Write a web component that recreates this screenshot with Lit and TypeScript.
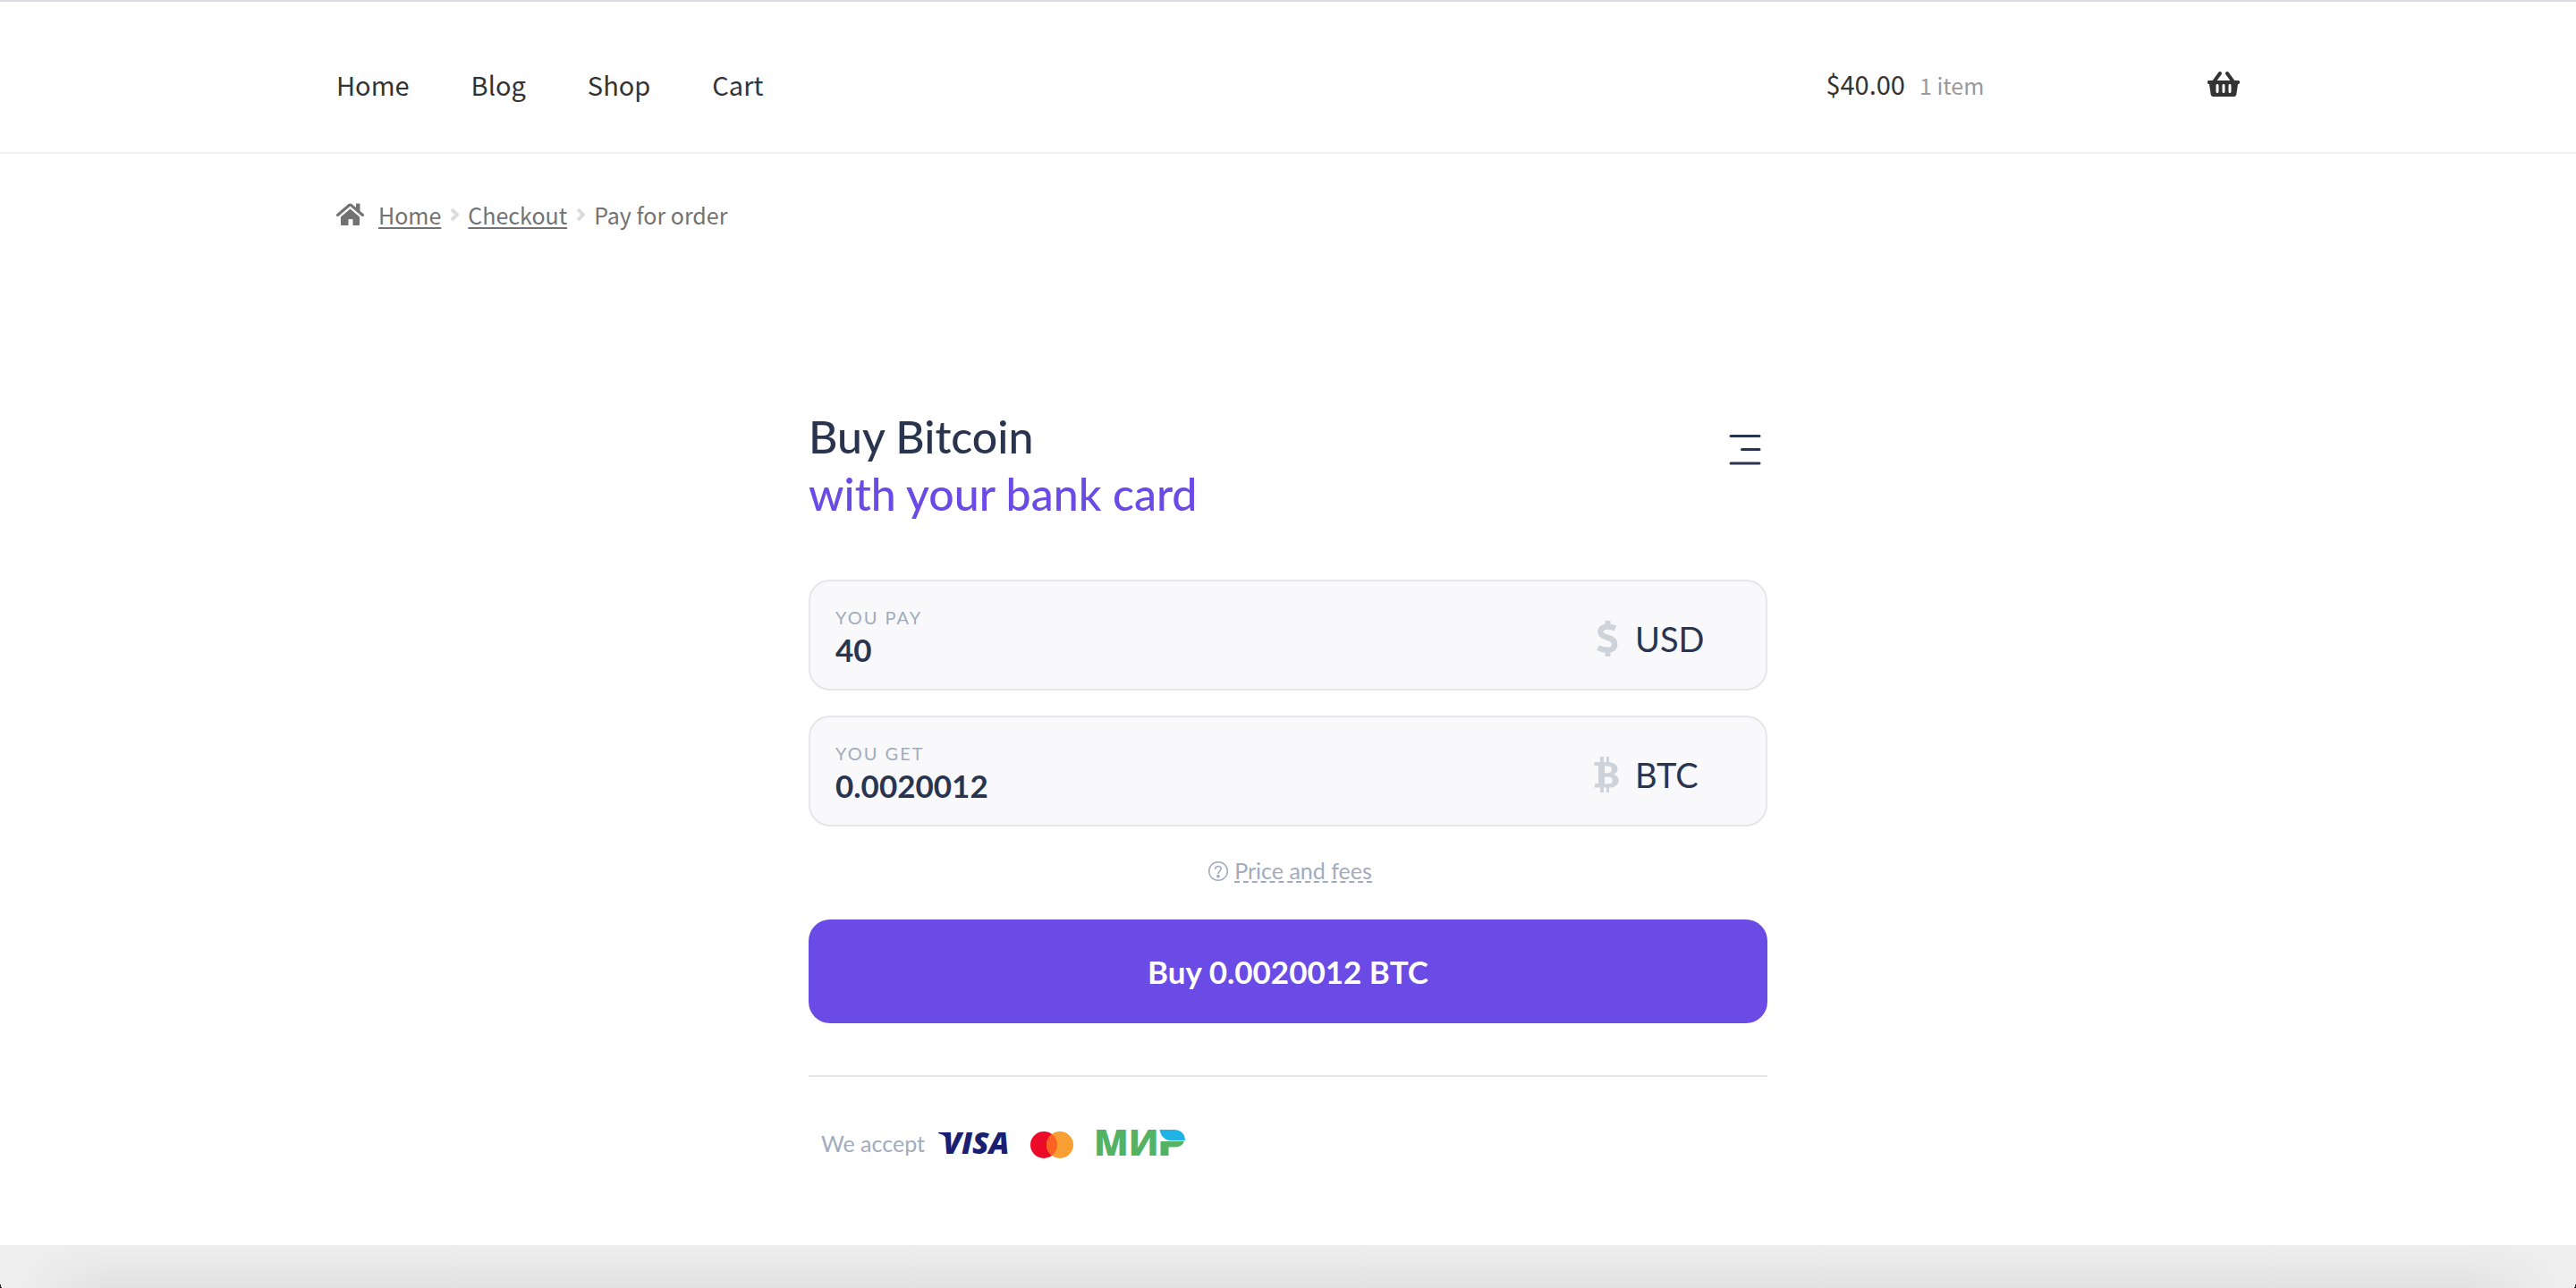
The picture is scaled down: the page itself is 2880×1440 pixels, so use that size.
import { LitElement, html, css, svg } from "lit";
import { customElement, property, state } from "lit/decorators.js";

const basketIcon = svg`<path d="M576 216v16c0 13.255-10.745 24-24 24h-8l-26.113 182.788C514.509 462.435 494.257 480 470.37 480H105.63c-23.887 0-44.139-17.565-47.518-41.212L32 256h-8c-13.255 0-24-10.745-24-24v-16c0-13.255 10.745-24 24-24h67.341l106.78-146.821c10.395-14.292 30.407-17.453 44.701-7.058 14.293 10.395 17.453 30.408 7.058 44.701L170.477 192h235.046L326.12 82.821c-10.395-14.292-7.234-34.306 7.059-44.701 14.291-10.395 34.306-7.235 44.701 7.058L484.659 192H552c13.255 0 24 10.745 24 24zM312 392V280c0-13.255-10.745-24-24-24s-24 10.745-24 24v112c0 13.255 10.745 24 24 24s24-10.745 24-24zm112 0V280c0-13.255-10.745-24-24-24s-24 10.745-24 24v112c0 13.255 10.745 24 24 24s24-10.745 24-24zm-224 0V280c0-13.255-10.745-24-24-24s-24 10.745-24 24v112c0 13.255 10.745 24 24 24s24-10.745 24-24z"/>`;

const dollarIcon = svg`
  <path d="M24 9.500C21 8.200 18.500 7.600 15.500 7.600C10.500 7.600 7.300 9.800 7.300 13.400C7.300 17 10.500 18.300 15 19.600C20 21.100 23.200 23 23.200 27.200C23.200 31.500 20 33.800 15 33.800C11.500 33.800 8 33 4.500 31.200" fill="none" stroke="currentColor" stroke-width="6.400"/>
  <path d="M13.500 1h4a1 1 0 0 1 1 1v5h-6v-5a1 1 0 0 1 1-1zM12.500 35h6v5a1 1 0 0 1-1 1h-4a1 1 0 0 1-1-1z"/>`;

const bitcoinIcon = svg`
  <path d="M7 1h4v6h3v-6h3v6.200c6 .5 9.500 3.300 9.500 7.500c0 3-1.700 5-4.500 6c3.600 .9 5.700 3.300 5.700 6.700c0 4.800-4 7.900-10.700 8.200V41h-3v-5.400h-3V41H7v-5.400H.5L1.500 31H5V11H.5V7H7zM12 11.500v7.700h3c3.200 0 5-1.400 5-4s-1.700-3.700-4.800-3.700zM12 23.500v8h3.500c3.500 0 5.300-1.400 5.300-4s-1.900-4-5.300-4z" fill-rule="evenodd"/>`;

/** One amount row: a labelled box with the currency at its right end. */
@customElement("amount-field")
export class AmountField extends LitElement {
  @property() label = "";
  @property() value = "";
  @property() currency = "";

  static styles = css`
    :host { display: block; }
    .box {
      display: flex;
      align-items: center;
      height: 124px;
      box-sizing: border-box;
      padding: 0 28px;
      border: 2px solid #e5e5eb;
      border-radius: 24px;
      background: #f9f9fc;
      color: #29344f;
    }
    .entry { flex: 1; display: flex; flex-direction: column; min-width: 0; padding-top: 8px; }
    .label { font-size: 20px; line-height: 24px; letter-spacing: 2px; color: #a2abbd; text-transform: uppercase; }
    .amount {
      width: 100%;
      padding: 0;
      border: 0;
      outline: 0;
      background: none;
      color: inherit;
      font: 700 35px/48px Lato, "Liberation Sans", sans-serif;
    }
    .currency { display: flex; align-items: center; gap: 18px; width: 144px; padding-top: 8px; font-size: 38px; line-height: 48px; margin-right: 20px; }
    .symbol { width: 28px; height: 42px; fill: currentColor; color: #ced2d9; flex: none; }
  `;

  render() {
    return html`
      <div class="box">
        <div class="entry">
          <label class="label" for="amount">${this.label}</label>
          <input class="amount" id="amount" inputmode="decimal" .value=${this.value} />
        </div>
        <div class="currency">
          <svg class="symbol" viewBox="0 0 28 42" aria-hidden="true">
            ${this.currency === "USD" ? dollarIcon : bitcoinIcon}
          </svg>
          <span>${this.currency}</span>
        </div>
      </div>
    `;
  }
}

@customElement("app-root")
export class AppRoot extends LitElement {
  @state() private pay = "40";
  @state() private receive = "0.0020012";

  static styles = css`
    :host {
      display: flex;
      flex-direction: column;
      min-height: 100vh;
      background: #fff;
      font-family: "Noto Sans CJK SC", "Noto Sans", sans-serif;
      color: #333;
    }
    a { color: inherit; text-decoration: none; }
    .container { width: 100%; max-width: 2128px; margin: 0 auto; }
    .site-header {
      box-sizing: border-box;
      border-top: 2px solid #dadde1;
      border-bottom: 2px solid #f0f0f0;
      padding: 75px 48px 61px;
    }
    .header-row { display: grid; grid-template-columns: 18fr 5fr; align-items: center; height: 32px; }
    .nav { display: flex; gap: 69px; font-size: 29px; line-height: 32px; }
    .cart { display: flex; align-items: center; justify-content: space-between; font-size: 29px; line-height: 32px; }
    .cart-total { display: flex; align-items: baseline; gap: 16px; }
    .count { font-size: 25px; color: #999; }
    .basket { display: block; width: 36px; height: 32px; fill: #333; }
    .crumb-bar { padding: 52px 48px 0; }
    .crumbs { display: flex; align-items: center; height: 32px; font-size: 25px; line-height: 32px; color: #727272; }
    .crumbs a { text-decoration: underline; text-decoration-thickness: 2px; text-underline-offset: 3px; }
    .home-icon { width: 31px; height: 26px; margin-right: 16px; fill: #727272; }
    .chevron { width: 10px; height: 16px; margin: 0 10px; fill: none; stroke: #dcdcdc; stroke-width: 4; }

    .widget {
      box-sizing: border-box;
      width: 100%;
      max-width: 1072px;
      margin: 200px auto 0;
      font-family: Lato, "Liberation Sans", sans-serif;
      color: #29344f;
    }
    .heading { display: flex; justify-content: space-between; align-items: flex-start; margin-bottom: 64px; }
    .title { margin: 0; font-size: 50px; line-height: 64px; font-weight: 500; }
    .accent { display: block; color: #6a4be6; }
    .menu { display: block; margin: 25px 3px 0 0; padding: 4px; border: 0; background: none; color: inherit; cursor: pointer; }
    .menu svg { display: block; width: 36px; height: 36px; fill: none; stroke: currentColor; stroke-width: 3; stroke-linecap: round; }
    .fields { display: grid; gap: 28px; }
    .fees { display: flex; align-items: center; justify-content: center; gap: 6px; padding: 37px 0 41px 4px; font-size: 25px; line-height: 24px; color: #a2abbd; }
    .fees svg { width: 24px; height: 24px; fill: none; stroke: currentColor; stroke-width: 1.500; stroke-linecap: round; }
    .fees a { border-bottom: 2px dashed currentColor; }
    .buy {
      display: block;
      width: 100%;
      height: 116px;
      border: 0;
      border-radius: 24px;
      background: #6a4be6;
      color: #fff;
      font: 700 35px/48px Lato, "Liberation Sans", sans-serif;
      cursor: pointer;
    }
    .accept {
      display: flex;
      align-items: center;
      margin-top: 58px;
      padding: 52px 14px;
      border-top: 2px solid #e5e5eb;
      font-size: 25px;
      line-height: 44px;
      color: #a2abbd;
    }
    .logo { display: block; height: 44px; overflow: visible; }
    .visa { width: 84px; margin-left: 14px; }
    .mastercard { width: 50px; margin-left: 19px; }
    .mir { width: 100px; margin-left: 25px; }

    .dock {
      height: 48px;
      margin-top: auto;
      background:
        linear-gradient(to top right, #222 50%, transparent 50%) left bottom / 2px 5px no-repeat,
        linear-gradient(to top left, #222 50%, transparent 50%) right bottom / 2px 5px no-repeat,
        linear-gradient(to right, #eeeeee 20px, #eeeeee00 120px, #eeeeee00 calc(100% - 120px), #eeeeee calc(100% - 20px)),
        linear-gradient(#eeeeee, #e2e2e2);
    }
  `;

  render() {
    return html`
      <header class="site-header">
        <div class="container header-row">
          <nav class="nav" aria-label="Primary">
            <a href="#home">Home</a><a href="#blog">Blog</a><a href="#shop">Shop</a><a href="#cart">Cart</a>
          </nav>
          <a class="cart" href="#cart">
            <span class="cart-total"><span>$40.00</span><span class="count">1 item</span></span>
            <svg class="basket" viewBox="0 0 576 512" aria-hidden="true">${basketIcon}</svg>
          </a>
        </div>
      </header>
      <div class="crumb-bar">
        <nav class="container crumbs" aria-label="Breadcrumb">
          <svg class="home-icon" viewBox="0 0 31 26" aria-hidden="true">
            <path d="M1.500 13.500L14.300 2.500Q15.500 1.600 16.700 2.500L29.500 13.500" fill="none" stroke="#727272" stroke-width="3" stroke-linecap="round" />
            <path d="M22 1Q22 .5 22.500 .5H26Q26.500 .5 26.500 1V9.500L22 5.800ZM15.500 6.500L26 15.500V24Q26 25 25 25H18.500V18.500Q18.500 18 18 18H14Q13.500 18 13.500 18.500V25H6Q5 25 5 24V15.500Z" />
          </svg>
          <a href="#home">Home</a>
          ${this.chevron()}
          <a href="#checkout">Checkout</a>
          ${this.chevron()}
          <span>Pay for order</span>
        </nav>
      </div>

      <main class="widget">
        <div class="heading">
          <h1 class="title">Buy Bitcoin <span class="accent">with your bank card</span></h1>
          <button class="menu" type="button" aria-label="Menu">
            <svg viewBox="0 0 36 36"><path d="M2 2.500H34M14.500 17.500H34M2 33H34" /></svg>
          </button>
        </div>
        <div class="fields">
          <amount-field label="You pay" currency="USD" .value=${this.pay}></amount-field>
          <amount-field label="You get" currency="BTC" .value=${this.receive}></amount-field>
        </div>
        <div class="fees">
          <svg viewBox="0 0 24 24" aria-hidden="true">
            <circle cx="12" cy="12" r="10.300" />
            <path d="M8.800 9.500C8.800 7.700 10.100 6.500 12 6.500S15.200 7.700 15.200 9.300C15.200 11.500 12 11.700 12 14.500" />
            <circle cx="12" cy="17.600" r="1.100" fill="currentColor" />
          </svg>
          <a href="#fees">Price and fees</a>
        </div>
        <button class="buy" type="button">Buy ${this.receive} BTC</button>
        <div class="accept">
          <span>We accept</span>
          <svg class="logo visa" viewBox="0 0 84 44" role="img" aria-label="Visa">
            <path d="M1 10H11L14 22Q10 13 1 11Z" fill="#1a1f71" />
            <text x="6" y="34" font-family="Open Sans, sans-serif" font-size="34" font-weight="800" font-style="italic" fill="#1a1f71">VISA</text>
          </svg>
          <svg class="logo mastercard" viewBox="0 0 50 44" role="img" aria-label="Mastercard">
            <circle cx="16" cy="24" r="15" fill="#eb0a28" />
            <circle cx="34" cy="24" r="15" fill="#f79f33" />
            <path d="M25 12A15 15 0 0 1 25 36A15 15 0 0 1 25 12Z" fill="#ff6023" />
          </svg>
          <svg class="logo mir" viewBox="0 0 100 44" role="img" aria-label="Mir">
            <text x="-3" y="36" font-family="Open Sans, sans-serif" font-size="40" font-weight="800" fill="#53b363">МИ</text>
            <path d="M71.500 20H98Q95.500 26.500 88 26.500H80.500V36H71.500Z" fill="#53b363" />
            <path d="M70.500 7H87C94 7 99 12 99 19H83C76 19 71.500 14 70.500 7Z" fill="#1fb3e6" />
          </svg>
        </div>
      </main>
      <footer class="dock"></footer>
    `;
  }

  private chevron() {
    return html`<svg class="chevron" viewBox="0 0 10 16" aria-hidden="true"><path d="M2 2L8 8L2 14" /></svg>`;
  }
}
